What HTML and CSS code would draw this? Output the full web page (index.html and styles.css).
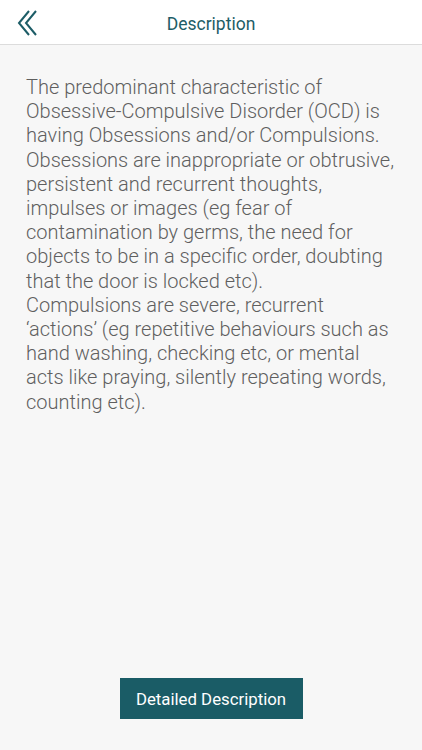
FILE: index.html
```html
<!DOCTYPE html>
<html lang="en">
<head>
<meta charset="utf-8">
<title>Description</title>
<link rel="stylesheet" href="styles.css">
</head>
<body>
<div class="screen">
  <header class="nav">
    <a class="back" href="#" aria-label="Back">
      <svg width="22" height="26" viewBox="0 0 22 26" fill="none" stroke="#1d5d67" stroke-width="2" stroke-linecap="butt">
        <path d="M12 1 L2 13 L12 25"/>
        <path d="M19 1 L9 13 L19 25"/>
      </svg>
    </a>
    <h1 class="title">Description</h1>
  </header>
  <main class="content">
    <p class="desc">The predominant characteristic of<br>Obsessive-Compulsive Disorder (OCD) is<br>having Obsessions and/or Compulsions.<br>Obsessions are inappropriate or obtrusive,<br>persistent and recurrent thoughts,<br>impulses or images (eg fear of<br>contamination by germs, the need for<br>objects to be in a specific order, doubting<br>that the door is locked etc).<br>Compulsions are severe, recurrent<br>‘actions’ (eg repetitive behaviours such as<br>hand washing, checking etc, or mental<br>acts like praying, silently repeating words,<br>counting etc).</p>
  </main>
  <footer class="actions">
    <button class="btn">Detailed Description</button>
  </footer>
</div>
</body>
</html>
```
FILE: styles.css
```css
html, body {
  margin: 0;
  padding: 0;
}
body {
  background: #f7f7f7;
  font-family: Roboto, "Liberation Sans", sans-serif;
}
.screen {
  height: 750px;
  display: flex;
  flex-direction: column;
}
.nav {
  height: 44px;
  background: #ffffff;
  border-bottom: 1px solid #dcdcdc;
  display: flex;
  align-items: center;
  justify-content: center;
  position: relative;
  flex-shrink: 0;
}
.back {
  position: absolute;
  left: 17px;
  top: 10px;
  display: block;
  line-height: 0;
}
.title {
  margin: 0;
  padding-top: 3px;
  font-size: 17.5px;
  font-weight: 400;
  color: #1d5d67;
}
.content {
  flex: 1;
  padding: 30px 20px 0 26px;
}
.desc {
  margin: 0;
  font-size: 20px;
  line-height: 24.2px;
  font-weight: 300;
  color: #5f5f5f;
  white-space: nowrap;
}
.actions {
  display: flex;
  justify-content: center;
  padding-bottom: 31px;
}
.btn {
  width: 183px;
  height: 41px;
  border: none;
  background: #1a5c66;
  color: #ffffff;
  font-family: Roboto, "Liberation Sans", sans-serif;
  font-size: 16.8px;
  font-weight: 400;
  padding: 0;
}
```
